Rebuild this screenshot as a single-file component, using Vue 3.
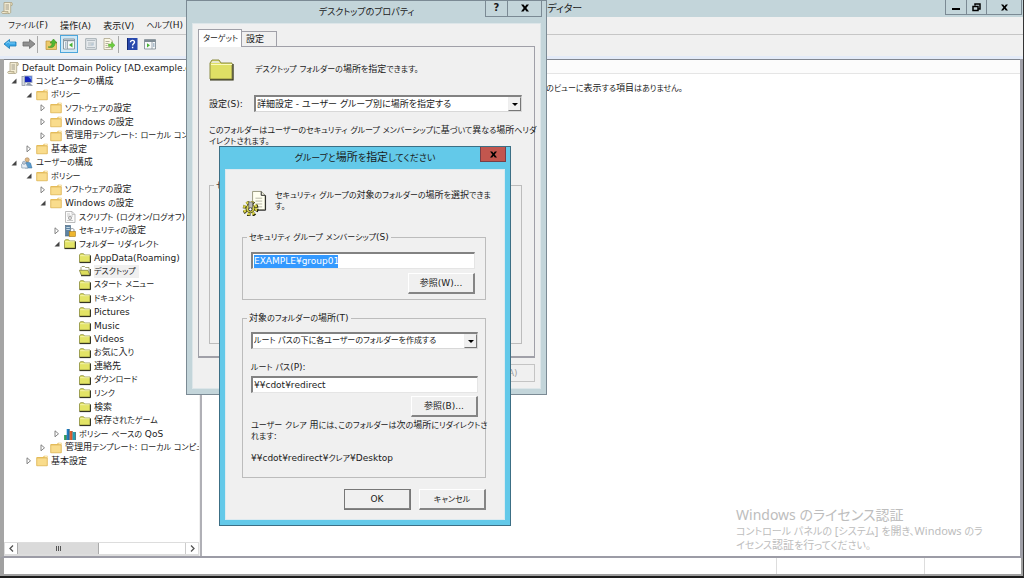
<script setup>
import { h, ref } from 'vue'

const menus = ['ファイル(F)', '操作(A)', '表示(V)', 'ヘルプ(H)']
const tree = [
  { d: 0, icon: 'scroll', text: 'Default Domain Policy [AD.example.com]' },
  { d: 1, icon: 'pc', open: true, text: 'コンピューターの構成' },
  { d: 2, icon: 'folder', open: true, text: 'ポリシー' },
  { d: 3, icon: 'folder', open: false, text: 'ソフトウェアの設定' },
  { d: 3, icon: 'folder', open: false, text: 'Windows の設定' },
  { d: 3, icon: 'folder', open: false, text: '管理用テンプレート: ローカル コンピューター' },
  { d: 2, icon: 'folder', open: false, text: '基本設定' },
  { d: 1, icon: 'user', open: true, text: 'ユーザーの構成' },
  { d: 2, icon: 'folder', open: true, text: 'ポリシー' },
  { d: 3, icon: 'folder', open: false, text: 'ソフトウェアの設定' },
  { d: 3, icon: 'folder', open: true, text: 'Windows の設定' },
  { d: 4, icon: 'script', text: 'スクリプト (ログオン/ログオフ)' },
  { d: 4, icon: 'lock', open: false, text: 'セキュリティの設定' },
  { d: 4, icon: 'lime', open: true, text: 'フォルダー リダイレクト' },
  { d: 5, icon: 'lime', text: 'AppData(Roaming)' },
  { d: 5, icon: 'limeopen', selected: true, text: 'デスクトップ' },
  { d: 5, icon: 'lime', text: 'スタート メニュー' },
  { d: 5, icon: 'lime', text: 'ドキュメント' },
  { d: 5, icon: 'lime', text: 'Pictures' },
  { d: 5, icon: 'lime', text: 'Music' },
  { d: 5, icon: 'lime', text: 'Videos' },
  { d: 5, icon: 'lime', text: 'お気に入り' },
  { d: 5, icon: 'lime', text: '連絡先' },
  { d: 5, icon: 'lime', text: 'ダウンロード' },
  { d: 5, icon: 'lime', text: 'リンク' },
  { d: 5, icon: 'lime', text: '検索' },
  { d: 5, icon: 'lime', text: '保存されたゲーム' },
  { d: 4, icon: 'chart', open: false, text: 'ポリシー ベースの QoS' },
  { d: 3, icon: 'folder', open: false, text: '管理用テンプレート: ローカル コンピューター' },
  { d: 2, icon: 'folder', open: false, text: '基本設定' },
]

const T = ({ t }) =>
  h('span', { class: 'tx' }, t.match(/[\x20-\x7e¥]+|[\u3000-\u30ff]+|[^\x20-\x7e¥\u3000-\u30ff]+/g).map((s) =>
    h('span', { class: /^[\x20-\x7e¥]/.test(s) ? 'la' : /^[\u3000-\u30ff]/.test(s) ? 'ka' : 'kj' }, s)))
T.props = ['t']

const group = ref('EXAMPLE¥group01')
const root = ref('¥¥cdot¥redirect')
</script>

<template>
  <div class="window">
    <svg class="defs" width="0" height="0" aria-hidden="true">
      <symbol id="scroll" viewBox="0 0 12 12">
        <path d="M3 .5h7.5c-1 1-.8 2-.8 3V10c0 1-.7 1.5-1.5 1.5H1.500c-1-.3-1-2 0-2H3z" fill="#f3ecd3" stroke="#aaa184" stroke-width=".8" />
        <path d="M4.500 3h3.500M4.500 5h3.500M4.500 7h3.500" stroke="#8c8978" stroke-width=".8" />
        <path d="M9.700 3.500h1.300c.8-1.500.4-3-.8-3M1.500 9.500h5.500v2" fill="#ded3ad" stroke="#aaa184" stroke-width=".7" />
      </symbol>
      <symbol id="pc" viewBox="0 0 12 12">
        <rect x="1" y="1.500" width="3" height="9" fill="#d5dae0" stroke="#858d99" stroke-width=".7" />
        <rect x="3.500" y="1" width="7.500" height="6.500" fill="#1525bd" stroke="#a4afbf" stroke-width=".9" />
        <path d="M7 1.500h3.500V5z" fill="#6e9cf0" />
        <path d="M4.500 10.500L6.500 8h2.500l3 3z" fill="#909bab" />
      </symbol>
      <symbol id="user" viewBox="0 0 12 12">
        <path d="M5.500 4.500l4 1.500 1.500 5H4z" fill="#5c9ccd" stroke="#326b9a" stroke-width=".5" />
        <circle cx="6.200" cy="2.800" r="2.100" fill="#dfb985" stroke="#9a7346" stroke-width=".5" />
        <path d="M.5 7.500c1-2 4-2 5 0l1.500 3.500H.8z" fill="#e7eef5" stroke="#7289a0" stroke-width=".6" />
        <circle cx="3" cy="5.800" r="1.600" fill="#bcc8d5" stroke="#7289a0" stroke-width=".5" />
      </symbol>
      <symbol id="folder" viewBox="0 0 12 12">
        <path d="M.5 2h6.500l1-1.300h3.500v10H.5z" fill="#e9bf58" />
        <path d="M.8 3h10.400v7.800H.8z" fill="#f9dc8c" stroke="#dcb65c" stroke-width=".7" />
        <path d="M8.500 1.700h2.500" stroke="#fff6d5" />
      </symbol>
      <symbol id="lime" viewBox="0 0 12 12">
        <path d="M.5 10V3l1-1.300h3L5.500 3H11v7z" fill="#e3e466" stroke="#8c8d3a" stroke-width=".8" />
        <path d="M1.200 3.700h9.500" stroke="#fbfbc5" stroke-width=".7" />
        <path d="M.5 10.600h11.100V3.500" fill="none" stroke="#252515" />
      </symbol>
      <symbol id="limeopen" viewBox="0 0 12 12">
        <path d="M2 9.500V2.500l1-1h2.500l1 1H10v7" fill="#fff" stroke="#8b8b56" stroke-width=".8" />
        <path d="M.3 5.300h8.500l2.200 4.800H2.500z" fill="#dddd5c" stroke="#777832" stroke-width=".7" />
        <path d="M2 10.700h9.300V4" fill="none" stroke="#252515" />
      </symbol>
      <symbol id="script" viewBox="0 0 12 12">
        <path d="M1.500.5h6.500l3 3v8H1.500z" fill="#fbfbfb" stroke="#aaa" stroke-width=".8" />
        <path d="M8 .5v3h3M3 3h3M3 5h6M3 9.500h6" fill="none" stroke="#b2b2b2" stroke-width=".7" />
        <circle cx="6" cy="7" r="1.600" fill="#ddd" stroke="#929292" stroke-width=".7" />
      </symbol>
      <symbol id="lock" viewBox="0 0 12 12">
        <rect x="1.500" y=".5" width="5" height="10.500" fill="#5c83a4" stroke="#48637b" stroke-width=".6" />
        <path d="M2.300 2.500h3.500M2.300 4.500h3.500" stroke="#dcebf3" stroke-width=".8" />
        <path d="M6.500 7V5c0-2 3.500-2 3.500 0v2" fill="none" stroke="#899199" />
        <rect x="5.200" y="6.500" width="6.200" height="5" fill="#eeb62e" stroke="#a67714" stroke-width=".6" />
      </symbol>
      <symbol id="chart" viewBox="0 0 12 12">
        <path d="M0 7h2.500v5H0z" fill="#3eae67" /><path d="M2.700 1h2.700v11H2.700z" fill="#1d7fc4" />
        <path d="M5.700 3h2.500V12H5.700z" fill="#e2602d" /><path d="M8.900 4h2.600v8H8.900z" fill="#22a0b4" />
        <path d="M2.200 7v5M5.200 1v11M8.300 3v9M11.600 4v8" stroke="#26323c" stroke-width=".6" />
      </symbol>
      <symbol id="bigfolder" viewBox="0 0 26 22">
        <path d="M1 20V4l2-3h7l2 3h11v16z" fill="#dfe065" stroke="#8c8c42" />
        <path d="M2 5.500h21" stroke="#fafabf" /><path d="M2 4l1.500-2h6L11 4z" fill="#e6e6d0" />
        <path d="M1 20.800h23V5" fill="none" stroke="#333315" stroke-width="1.300" />
      </symbol>
      <symbol id="gear" viewBox="0 0 26 26">
        <path d="M11 1h9l4 4v15H11z" fill="#fffff0" stroke="#999980" /><path d="M24.500 5v15.500H13M20 1v4h4" fill="none" stroke="#222" />
        <path d="M14 8h7M14 11h7M14 14h7M14 17h7" stroke="#b5b5a6" />
        <circle cx="9" cy="19" r="6.500" fill="none" stroke="#20200a" stroke-width="3.500" stroke-dasharray="3 2.100" />
        <circle cx="8.500" cy="18.500" r="6.300" fill="none" stroke="#d7d044" stroke-width="2.500" stroke-dasharray="2.700 2.250" />
        <circle cx="8.700" cy="18.700" r="4.500" fill="#d9d450" stroke="#55541c" /><circle cx="8.700" cy="19.500" r="1.800" fill="#fff" stroke="#222" />
        <path d="M7 12h4v6H7z" fill="#bbb" stroke="#555" stroke-width=".7" />
      </symbol>
      <symbol id="back" viewBox="0 0 14 12"><path d="M1 6l5.500-4.500V4H13v4H6.500v2.500z" fill="#3ba8e8" stroke="#1779b5" stroke-width=".8" /><path d="M3 5.500L6 3.500V5h6" fill="none" stroke="#98dcfa" stroke-width=".7" /></symbol>
      <symbol id="next" viewBox="0 0 14 12"><path d="M13 6L7.500 1.500V4H1v4h6.500v2.500z" fill="#909090" stroke="#6c6c6c" stroke-width=".8" /></symbol>
      <symbol id="up" viewBox="0 0 12 12"><path d="M1 3h4l1 1h5.500v7.500H1z" fill="#ecca69" stroke="#bb9036" stroke-width=".7" /><path d="M3 9c3 0 4-2 4-4H5l3.500-4L12 5h-2c0 4-3 5.500-7 4" fill="#52b832" stroke="#378323" stroke-width=".5" /></symbol>
      <symbol id="panes" viewBox="0 0 12 12"><path d="M.5 1h11v10H.5z" fill="#f7f9fa" stroke="#79858e" stroke-width=".8" /><path d="M1 2.500h10" stroke="#8995a0" stroke-width="1.500" /><path d="M4.500 3v8" stroke="#8995a0" stroke-width=".8" /><path d="M2 5h1.500M2 7h1.500M2 9h1.500" stroke="#6787a5" /><path d="M9.500 4.500v5L6 7z" fill="#49b334" /></symbol>
      <symbol id="props" viewBox="0 0 12 12"><path d="M.7.700h10.600v10.600H.7z" fill="#e5e9ec" stroke="#9da6ad" stroke-width=".9" /><path d="M2 2.500h8M2 9.500h8M3 5h6M3 7h4" stroke="#a6b0b8" stroke-width=".8" /><circle cx="7.500" cy="6.500" r="1.300" fill="#b9c8d5" /></symbol>
      <symbol id="export" viewBox="0 0 12 12"><path d="M1 .5h6l2.500 2.500v8.500H1z" fill="#fbf8e5" stroke="#a39b80" stroke-width=".7" /><path d="M2.500 3.500h4M2.500 5.500h3M2.500 7.500h2M2.500 9.500h5" stroke="#96927f" stroke-width=".7" /><path d="M5.500 6h3V3.800L12 7.200 8.500 10.500V8.500h-3z" fill="#6dce3e" stroke="#499726" stroke-width=".4" /></symbol>
      <symbol id="help" viewBox="0 0 12 12"><path d="M1 0h10.500v12H1z" fill="#2949ad" /><path d="M1.500 0v12" stroke="#112771" /><path d="M4.500 4.200c0-2.500 4-2.500 4 0 0 1.300-1.900 1.500-1.900 3.200M6.600 8.700v1.500" fill="none" stroke="#fff" stroke-width="1.400" /></symbol>
      <symbol id="view" viewBox="0 0 12 12"><path d="M.5 1.500h11v9.500H.5z" fill="#f7f9fa" stroke="#79858e" stroke-width=".8" /><path d="M.5 3h11" stroke="#7e8b94" stroke-width="2" /><path d="M8 4v7" stroke="#8995a0" stroke-width=".8" /><path d="M3 5.200v4.200L6 7.300z" fill="#49b334" /><path d="M9 6h1.500M9 8h1.500" stroke="#6787a5" /></symbol>
      <symbol id="x" viewBox="0 0 8 8"><path d="M0 .5h2.500L4 2.600 5.500.5H8L5.300 4 8 7.500H5.500L4 5.400 2.500 7.500H0L2.700 4z" fill="#000" /></symbol>
    </svg>

    <header class="titlebar">
      <svg class="appicon"><use href="#scroll" /></svg>
      <h1>グループ ポリシー管理エディター</h1>
      <div class="winbtns">
        <button aria-label="最小化"><svg width="8" height="8"><path d="M0 5h8v2H0z" /></svg></button>
        <button aria-label="元に戻す"><svg width="9" height="9"><path d="M1 3.500h5v4H1zM3 2.500V1h5v5H6.500" fill="none" stroke="#000" stroke-width="1.500" /></svg></button>
        <button class="wide" aria-label="閉じる"><svg width="7" height="7"><use href="#x" /></svg></button>
      </div>
    </header>

    <nav class="menubar"><button v-for="m in menus" :key="m"><T :t="m" /></button></nav>

    <div class="toolbar">
      <button aria-label="戻る"><svg class="wideicon"><use href="#back" /></svg></button>
      <button aria-label="進む"><svg class="wideicon"><use href="#next" /></svg></button>
      <i class="sep"></i>
      <button aria-label="上へ"><svg><use href="#up" /></svg></button>
      <button class="on" aria-label="ツリーの表示"><svg><use href="#panes" /></svg></button>
      <button aria-label="プロパティ"><svg><use href="#props" /></svg></button>
      <button aria-label="エクスポート"><svg><use href="#export" /></svg></button>
      <i class="sep"></i>
      <button aria-label="ヘルプ"><svg><use href="#help" /></svg></button>
      <button aria-label="操作ウィンドウ"><svg><use href="#view" /></svg></button>
    </div>

    <main class="body">
      <section class="left">
        <ul class="tree">
          <li v-for="(n, i) in tree" :key="i" :class="['d' + n.d, { selected: n.selected }]">
            <span v-if="n.d" class="arrow">
              <svg v-if="n.open === true" width="6" height="6"><path d="M5.500.500v5H.5z" fill="#444" /></svg>
              <svg v-else-if="n.open === false" width="6" height="8"><path d="M1 .8v6L4.500 3.800z" fill="#fff" stroke="#777" stroke-width=".9" /></svg>
            </span>
            <svg class="ico"><use :href="'#' + n.icon" /></svg>
            <span class="label"><T :t="n.text" /></span>
          </li>
        </ul>
        <div class="hscroll">
          <button aria-label="左へ"><svg width="5" height="7"><path d="M4 .5L1 3.500l3 3" fill="none" stroke="#555" stroke-width="1.300" /></svg></button>
          <div class="track"><div class="thumb"><i></i><i></i><i></i></div></div>
          <button aria-label="右へ"><svg width="5" height="7"><path d="M1 .5l3 3-3 3" fill="none" stroke="#555" stroke-width="1.300" /></svg></button>
        </div>
      </section>
      <section class="right">
        <div class="colhead"></div>
        <p class="empty"><T t="このビューに表示する項目はありません。" /></p>
      </section>
    </main>
    <footer class="status"><span></span><span></span><span></span></footer>

    <aside class="watermark">
      <strong>Windows のライセンス認証</strong>
      <p><T t="コントロール パネルの [システム] を開き、Windows のラ" /><br><T t="イセンス認証を行ってください。" /></p>
    </aside>

    <section class="dialog props">
      <header>
        <h2><T t="デスクトップのプロパティ" /></h2>
        <div class="winbtns">
          <button class="q" aria-label="ヘルプ">?</button>
          <button class="wide" aria-label="閉じる"><svg width="8" height="8"><use href="#x" /></svg></button>
        </div>
      </header>
      <div class="client">
        <div class="tabs"><button class="active"><T t="ターゲット" /></button><button><T t="設定" /></button></div>
        <div class="page">
          <div class="intro"><svg class="bigfolder"><use href="#bigfolder" /></svg><p><T t="デスクトップ フォルダーの場所を指定できます。" /></p></div>
          <div class="setting">
            <label for="setting"><T t="設定(S):" /></label>
            <div class="combo"><select id="setting"><option>詳細設定 - ユーザー グループ別に場所を指定する</option></select><i></i></div>
          </div>
          <p class="desc"><T t="このフォルダーはユーザーのセキュリティ グループ メンバーシップに基づいて異なる場所へリダ" /><br><T t="イレクトされます。" /></p>
          <fieldset class="members"><legend><T t="セキュリティ グループ メンバーシップ" /></legend></fieldset>
        </div>
        <div class="actions"><button disabled><T t="適用(A)" /></button></div>
      </div>
    </section>

    <section class="dialog pick">
      <header>
        <h2><T t="グループと場所を指定してください" /></h2>
        <button class="close" aria-label="閉じる"><svg width="7" height="7"><use href="#x" /></svg></button>
      </header>
      <div class="client">
        <div class="lead"><svg class="gear"><use href="#gear" /></svg><p><T t="セキュリティ グループの対象のフォルダーの場所を選択できま" /><br><T t="す。" /></p></div>
        <fieldset class="sec">
          <legend><label for="grp"><T t="セキュリティ グループ メンバーシップ(S)" /></label></legend>
          <div class="field"><span class="hl"><input id="grp" v-model="group"></span></div>
          <button class="btn"><T t="参照(W)..." /></button>
        </fieldset>
        <fieldset class="target">
          <legend><label for="loc"><T t="対象のフォルダーの場所(T)" /></label></legend>
          <div class="combo"><select id="loc"><option>ルート パスの下に各ユーザーのフォルダーを作成する</option></select><i></i></div>
          <label class="rootlabel" for="root"><T t="ルート パス(P):" /></label>
          <div class="field"><input id="root" v-model="root"></div>
          <button class="btn"><T t="参照(B)..." /></button>
          <p><T t="ユーザー クレア 用には、このフォルダーは次の場所にリダイレクトさ" /><br><T t="れます:" /></p>
          <p class="path"><T t="¥¥cdot¥redirect¥クレア¥Desktop" /></p>
        </fieldset>
        <div class="actions"><button class="btn default"><T t="OK" /></button><button class="btn"><T t="キャンセル" /></button></div>
      </div>
    </section>
  </div>
</template>

<style>
html, body { margin: 0; background: #1c1c1c; }
.tx .la { font-size: 9px; }
.tx .ka { font-size: 8px; }
h2 .tx .ka { font-size: 9px; }
.watermark .tx .la { font-size: 11px; }
.watermark .tx .ka { font-size: 10px; }
</style>

<style scoped>
.window, button, input, select { font-family: "DejaVu Sans", "Noto Sans CJK JP", sans-serif; font-size: 9px; line-height: 12px; color: #1a1a1a; font-feature-settings: "palt"; }
.window { position: relative; box-sizing: border-box; height: 100vh; min-height: 560px; display: flex; flex-direction: column; overflow: hidden; border-bottom: 2px solid #1c1c1c; border-right: 1px solid #333; background: #f0f0f0; }
* { box-sizing: border-box; }
.defs { position: absolute; }
h1, h2, p, ul { margin: 0; padding: 0; font-weight: 400; }
button { margin: 0; padding: 0; border: 0; background: none; white-space: nowrap; color: inherit; }
svg { display: block; flex: none; }

.titlebar { position: relative; flex: none; display: flex; justify-content: center; height: 17px; background: #c3d5da; }
.titlebar h1 { font-size: 10px; line-height: 18px; }
.appicon { position: absolute; left: 1px; top: 2px; width: 12px; height: 12px; }
.winbtns { position: absolute; right: 1px; top: 0; display: flex; height: 15px; border: 1px solid #7b8a94; border-top: 0; }
.winbtns button { display: flex; align-items: center; justify-content: center; width: 20px; }
.winbtns button + button { border-left: 1px solid #7b8a94; }
.winbtns .wide { width: 35px; }

.menubar { flex: none; display: flex; gap: 12px; height: 17px; padding-left: 8px; }
.toolbar { flex: none; display: flex; align-items: center; height: 25px; padding: 0 3px 3px; border-top: 1px solid #c6c6c6; border-bottom: 3px solid #e4ebf8; }
.toolbar button { display: flex; align-items: center; justify-content: center; width: 18px; height: 18px; }
.toolbar svg { width: 12px; height: 12px; }
.toolbar svg.wideicon { width: 14px; }
.toolbar button:nth-child(1), .toolbar button:nth-child(2) { width: 17px; }
.toolbar button:nth-child(1) { justify-content: flex-start; }
.toolbar .on { border: 1px solid #4ca6dc; background: #cfe8f6; margin-right: 4px; }
.sep { width: 1px; height: 17px; margin: 0 4px 0 0; background: #aaa; }

.body { flex: 1; min-height: 0; display: flex; border-left: 4px solid #a5a5a5; border-right: 3px solid #a0a0a8; border-bottom: 2px solid #9c9ca6; }
.left { width: 195px; flex: none; display: flex; flex-direction: column; overflow: hidden; border-top: 1px solid #828790; background: #fff; }
.tree { list-style: none; height: 407px; flex: none; margin-top: 1px; display: grid; grid-template-rows: repeat(30, 1fr); }
.tree li { display: flex; align-items: center; min-width: 0; min-height: 0; white-space: nowrap; }
.arrow { display: flex; width: 8px; flex: none; }
.ico { width: 12px; height: 12px; margin: 0 3px 0 2px; }
.d0 { padding-left: 1px; }
.d1 { padding-left: 7px; }
.d2 { padding-left: 22px; }
.d3 { padding-left: 36px; }
.d4 { padding-left: 50px; }
.d5 { padding-left: 65px; }
.selected .label { background: #f0f0f0; padding-right: 3px; }
.hscroll { flex: none; display: flex; margin-top: auto; height: 14px; border: 1px solid #ddd; border-width: 1px 1px 2px; }
.hscroll button { display: flex; align-items: center; justify-content: center; width: 12px; }
.track { flex: 1; border-right: 1px solid #ccc; }
.thumb { display: flex; justify-content: center; align-items: center; gap: 1px; width: 49%; height: 100%; background: #dadada; border: 1px solid #aaa; border-width: 0 1px; }
.thumb i { width: 1px; height: 5px; background: #555; }
.right { flex: 1; min-width: 0; margin-left: 1px; border-left: 2px solid #b0b0b6; border-top: 1px solid #828790; background: #fff; }
.colhead { height: 14px; background: #fcfcfc; border-bottom: 1px solid #e5e5e5; }
.empty { text-align: center; padding-top: 8px; }
.status { flex: none; display: flex; height: 18px; background: #fff; border: solid #a0a0a0; border-width: 0 2px 2px 4px; }
.status span:nth-child(1) { flex: 1; }
.status span:nth-child(2) { width: 149px; border: 1px solid #ddd; border-width: 0 1px; }
.status span:nth-child(3) { width: 96px; }

.watermark { position: absolute; left: 736px; bottom: 24px; color: #bdbdbd; font-family: "Noto Sans", "Noto Sans CJK JP", sans-serif; }
.watermark strong { display: block; font-size: 14px; line-height: 18px; font-weight: 400; }
.watermark p { font-size: 11px; line-height: 14px; white-space: nowrap; }

.dialog { position: absolute; display: flex; flex-direction: column; border: 1px solid #7b8a94; background: #c3d5da; padding: 0 5px 5px; }
.dialog header { position: relative; flex: none; text-align: center; }
.dialog h2 { font-size: 11px; line-height: 22px; }
.client { flex: 1; background: #f0f0f0; display: flex; flex-direction: column; }
.props { left: 186px; top: 0; width: 361px; height: 395px; }
.props header { height: 22px; }
.props .winbtns { top: -1px; right: -1px; height: 17px; }
.props .winbtns button { width: 21px; }
.props .winbtns .wide { width: 34px; }
.winbtns .q { font-size: 10px; font-weight: 700; }
.props .client { padding: 5px 5px 6px; border: 1px solid #dde6e9; }
.tabs { display: flex; align-items: flex-end; height: 17px; }
.tabs button { height: 15px; padding: 0 4px; width: 35px; border: 1px solid #a0a0a8; border-left: 0; border-bottom: 0; text-align: left; }
.tabs .active { position: relative; z-index: 1; width: 44px; height: 18px; margin-bottom: -1px; border-left: 1px solid #a0a0a8; background: #fff; }
.page { flex: 1; border: 1px solid #a0a0a8; border-bottom-width: 2px; padding: 11px 12px 12px 10px; display: flex; flex-direction: column; }
.intro { display: flex; align-items: center; gap: 20px; height: 23px; }
.bigfolder { width: 26px; height: 22px; }
.setting { display: flex; align-items: center; margin-top: 14px; }
.setting label { width: 45px; }
.setting .combo { flex: 1; }
.combo { position: relative; height: 17px; border: 1px solid #d8d8d8; border-top: 2px solid #828282; border-left: 2px solid #828282; background: #fff; }
.combo select { display: block; width: 100%; height: 100%; border: 0; padding: 0 14px 0 1px; appearance: none; background: #fff; outline: 0; }
#loc { font-size: 8px; }
.combo i { position: absolute; right: 0; top: 0; width: 13px; height: 100%; background: #f0f0f0; border: 1px solid #eee; border-right-color: #777; border-bottom-color: #777; pointer-events: none; }
.combo i::after { content: ""; position: absolute; left: 3px; top: 5px; border: 3px solid transparent; border-top-color: #000; border-bottom: 0; }
.desc { margin-top: 13px; line-height: 11px; white-space: nowrap; }
fieldset { margin: 0; min-width: 0; border: 1px solid #bcbcbc; padding: 0; }
legend { padding: 0 2px; margin-left: 4px; line-height: 12px; }
.members { flex: 1; margin-top: 32px; }
.props .actions { display: flex; justify-content: flex-end; margin-top: 6px; }
.props .actions button { width: 66px; height: 18px; border: 1px solid #c4c4c4; color: #a0a0a0; }

.pick { left: 219px; top: 146px; width: 292px; height: 380px; border-color: #3c6f85; background: #63c9e9; }
.pick header { height: 22px; }
.pick .close { position: absolute; right: -1px; top: 0; display: flex; align-items: center; justify-content: center; width: 26px; height: 15px; background: #c2564e; border: 1px solid #783f48; border-top: 0; }
.pick .client { padding: 20px 18px 9px 16px; border: 1px solid #dceaf0; }
.lead { display: flex; gap: 8px; height: 41px; line-height: 11px; white-space: nowrap; }
.gear { width: 25px; height: 26px; }
.field { height: 17px; border: 1px solid #e5e5e5; border-top: 2px solid #828282; border-left: 2px solid #828282; background: #fff; display: flex; align-items: center; padding-left: 1px; }
.field input { display: block; width: 100%; height: 13px; border: 0; padding: 0; outline: 0; background: none; color: inherit; }
.hl { background: #3399ff; color: #fff; width: 84px; }
.btn { display: block; width: 67px; height: 21px; border: 1px solid #fff; border-right: 2px solid #858585; border-bottom: 2px solid #858585; background: #f0f0f0; }
.pick legend { margin-left: -4px; }
.sec { height: 69px; padding: 8px 10px 0 8px; }
.sec .btn { margin: 4px 0 0 auto; }
.target { height: 166px; margin-top: 12px; padding: 7px 7px 0 8px; }
.target .btn { margin: 3px 0 3px auto; }
.rootlabel { display: block; margin: 12px 0 2px; }
.target p { line-height: 11px; white-space: nowrap; }
.target .path { margin-top: 11px; }
.pick .actions { display: flex; justify-content: flex-end; gap: 8px; margin-top: auto; }
.default { outline: 1px solid #777; outline-offset: -1px; }
</style>
